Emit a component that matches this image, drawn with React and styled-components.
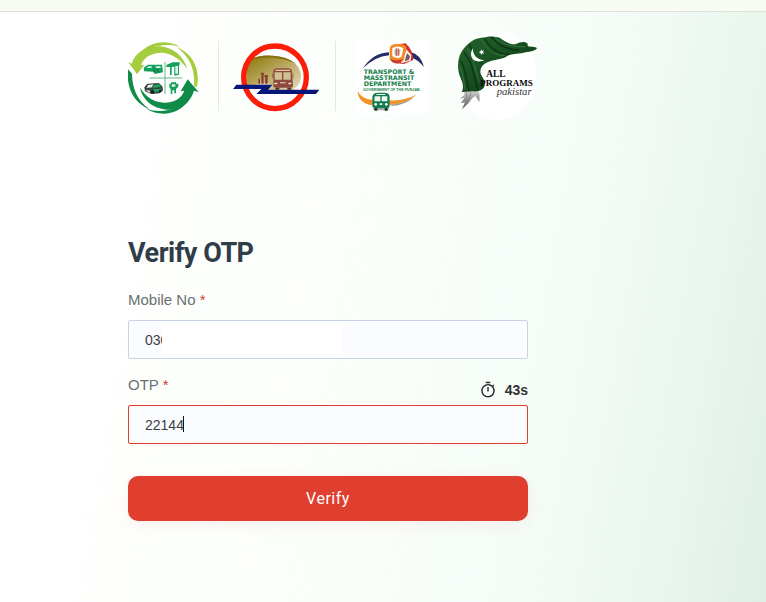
import React, { useState } from 'react';
import styled, { createGlobalStyle } from 'styled-components';
import { MdOutlineTimer } from 'react-icons/md';

const GlobalStyle = createGlobalStyle`
  *, *::before, *::after {
    box-sizing: border-box;
  }

  body {
    margin: 0;
    font-family: 'Liberation Sans', Arial, sans-serif;
    color: #333;
  }
`;

const Page = styled.div`
  display: flex;
  flex-direction: column;
  min-height: 100vh;
`;

const TopBar = styled.header`
  height: 12px;
  background: #f8fbf1;
  border-bottom: 1px solid #dde3d8;
`;

const Main = styled.main`
  flex: 1;
  padding: 16px 128px 64px;
  background: linear-gradient(100deg, #fff 12%, #fdfffc 30%, #fafefb 50%, #f5fcf8 70%, #e9f5ed 88%, #dfefe5 100%);

  @media (max-width: 600px) {
    padding: 16px 24px 64px;
  }
`;

const Logos = styled.div`
  display: flex;
  align-items: center;
  width: max-content;
  margin-bottom: 109px;
`;

const Logo = styled.svg`
  display: block;
  flex: none;
  margin-left: ${(props) => props.$gap || 0}px;
`;

const Divider = styled.span`
  width: 1px;
  height: 70px;
  margin: 0 ${(props) => props.$after}px 0 ${(props) => props.$before}px;
  background: #e3e9e5;
`;

const Form = styled.form`
  display: flex;
  flex-direction: column;
  max-width: 400px;
`;

const Title = styled.h1`
  margin: 0 0 19px;
  font-family: Roboto, sans-serif;
  font-size: 27px;
  font-weight: 700;
  line-height: 40px;
  letter-spacing: -0.5px;
  color: #2f3d48;
`;

const LabelRow = styled.div`
  display: flex;
  justify-content: space-between;
  height: 28px;
`;

const Label = styled.label`
  font-size: 15px;
  line-height: 16px;
  color: #6b6f73;
`;

const Required = styled.span`
  color: #d0432f;
`;

const Timer = styled.span`
  display: flex;
  align-items: center;
  align-self: flex-end;
  gap: 8px;
  height: 30px;
  font-size: 14px;
  font-weight: 700;
  color: #333;
`;

const Field = styled.div`
  position: relative;
  margin-bottom: ${(props) => (props.$last ? 32 : 18)}px;
`;

const Input = styled.input`
  display: block;
  width: 100%;
  height: 39px;
  padding: 0 16px;
  border: 1px solid ${(props) => (props.$active ? '#e03e2f' : '#c8d3e3')};
  border-radius: 2px;
  outline: none;
  background: #fbfcff;
  font-family: inherit;
  font-size: 14px;
  color: #3c4045;
  caret-color: transparent;
`;

// hides the rest of the number
const Mask = styled.span`
  position: absolute;
  top: 4px;
  left: 34px;
  width: 180px;
  height: 31px;
  background: #fff;
`;

const Caret = styled.span`
  position: absolute;
  top: 11px;
  left: 55px;
  width: 1px;
  height: 16px;
  background: #111;
`;

const Submit = styled.button`
  height: 45px;
  border: 0;
  border-radius: 10px;
  background: #e03e2f;
  box-shadow: 0 4px 16px rgba(224, 62, 47, 0.08);
  font-family: Roboto, sans-serif;
  font-size: 16px;
  font-weight: 400;
  letter-spacing: 0.5px;
  color: #fff;
  cursor: pointer;
`;

const CycleLogo = () => (
  <Logo width="72" height="86" viewBox="24 -3 216 258" role="img" aria-label="Transport cycle">
    <circle cx="131" cy="132" r="96" fill="#fff" />
    <g fill="#a5cd3f">
      <path d="M24 84 L35 89 C45 55 80 36 120 37 C160 40 190 66 202 104 C181 76 155 58 127 56 C96 55 72 70 63 92 L73 93 L51 120 Z" />
      <path d="M52 67 C82 24 135 13 181 39 C137 26 91 35 52 67 Z" />
      <path d="M170 39 C215 56 242 103 231 158 L222 157 C226 108 210 69 170 39 Z" />
    </g>
    <g fill="#118b48">
      <path d="M236 174 L222 170 C210 210 176 230 140 227 C98 224 68 199 59 160 C79 192 105 206 133 206 C162 206 184 194 193 170 L182 172 L203 136 Z" />
      <path d="M208 197 C178 240 125 251 79 225 C123 238 169 229 208 197 Z" />
      <path d="M90 227 C43 207 18 164 24 106 L36 119 C36 158 50 199 90 227 Z" />
    </g>
    <path d="M135 84 V180 M89 132 H187" stroke="#65b88c" strokeWidth="3" />
    <g fill="#12a15a">
      <path d="M71 101 L84 92 L126 92 L129 115 L105 120 L99 113 L72 112 Z" />
      <path d="M139 93 L158 85 H179 V92 H177 V122 L163 125 V98 L155 99 V123 H150 V99 H139 Z" />
      <path d="M148 149 H153 V145 H168 V149 H175 V158 L168 165 V178 H163 V169 H157 V180 H152 V165 L148 160 Z" />
    </g>
    <path d="M78 103 L86 97 H95 V102 H80 Z M106 97 H122 V102 H109 Z M166 96 H174 V119 H166 Z M155 151 H166 V158 H155 Z" fill="#d8f3e5" />
    <path d="M101 107 l4 8 m6 -10 l5 11" stroke="#195c3c" strokeWidth="3" />
    <path d="M73 160 L82 149 L116 147 L127 157 L129 169 L119 178 L94 180 L75 172 Z" fill="#34463d" />
    <path d="M84 153 L100 151 L96 160 L80 162 Z M77 168 L91 170 L88 176 Z" fill="#e8f1eb" />
    <path d="M102 153 L117 151 L123 158 L99 162 Z M99 166 L126 164 L119 172 L101 175 Z" fill="#19a35e" />
    <circle cx="98" cy="174" r="5" fill="#171b19" />
    <circle cx="121" cy="171" r="4" fill="#171b19" />
  </Logo>
);

const MetroLogo = () => (
  <Logo width="88" height="86" viewBox="69 -3 264 258" role="img" aria-label="Metro bus authority">
    <defs>
      <linearGradient id="hill" x1="0" y1="0" x2="1" y2="1">
        <stop offset="0" stopColor="#887608" />
        <stop offset="0.45" stopColor="#b5a456" />
        <stop offset="1" stopColor="#e5dcc0" />
      </linearGradient>
    </defs>
    <circle cx="195" cy="130" r="94" fill="#fff" />
    <path d="M109 153 V88 C119 71 145 65 181 65 C235 65 272 91 273 124 C274 143 266 157 249 167 H155 L168 153 Z" fill="url(#hill)" />
    <path d="M119 80 C137 66 162 64 184 65 C215 66 240 74 258 90 C220 70 164 65 119 80 Z" fill="#84720d" />
    <path d="M133 153 Q158 137 184 151 L173 158 H134 Z" fill="#f0dfd3" opacity="0.7" />
    <path d="M145 134 H150 V150 H145 Z M154 119 H161 V149 H154 Z M165 126 H173 V149 H165 Z M152 116 H162 V121 H152 Z M163 123 H174 V128 H163 Z" fill="#884236" />
    <circle cx="195" cy="130" r="94" fill="none" stroke="#fa1d08" strokeWidth="16" />
    <g>
      <path d="M190 157 V114 Q190 103 201 103 H234 Q245 103 246 114 L249 155 Q249 161 240 161 H199 Q190 161 190 157 Z" fill="#8d4a3c" />
      <path d="M196 107 H240 V111 H196 Z" fill="#dbc99d" />
      <path d="M194 115 H216 V137 H194 Z M220 115 H242 V137 H220 Z" fill="#d1c092" />
      <path d="M193 146 H202 V151 H193 Z M235 146 H244 V151 H235 Z M210 145 H227 V148 H210 Z" fill="#f0dfc7" />
      <path d="M188 118 V132 M249 118 V132" stroke="#8d4a3c" strokeWidth="2" />
      <path d="M196 161 H208 V167 H196 Z M232 161 H244 V167 H232 Z" fill="#5d2c25" />
    </g>
    <path d="M79 152 H187 L174 167 H328 L318 180 H139 L154 165 H69 Z" fill="#061779" />
  </Logo>
);

const DeptText = styled.text`
  font-family: 'DejaVu Sans', Verdana, sans-serif;
  font-size: 19px;
  font-weight: 700;
  fill: #17804b;
`;

const DeptSubText = styled(DeptText)`
  font-family: 'Liberation Sans', Arial, sans-serif;
  font-size: 11px;
`;

const DepartmentLogo = () => (
  <Logo width="72" height="86" viewBox="33 -3 216 258" role="img" aria-label="Transport and Masstransit Department">
    <path d="M33 20 H249 V240 H33 Z" fill="#fff" />
    <path d="M54 103 Q84 57 132 55 L132 64 Q89 68 54 103 Z" fill="#252c69" />
    <path d="M195 53 Q228 61 237 99 Q218 76 195 69 Z" fill="#252c69" />
    <path d="M160 31 L182 28 Q205 50 205 78 L177 90 L154 88 Z" fill="#d52f2d" />
    <path d="M184 46 L199 63 L197 80 L168 88 Z" fill="#f6efea" />
    <path d="M186 58 L195 67 L192 77 L179 82 Z" fill="#78546b" />
    <path d="M134 77 V43 Q136 30 155 30 Q183 28 184 41 L176 79 Q163 92 147 85 Z" fill="#f08a22" />
    <path d="M142 42 Q157 33 175 42 L170 68 Q157 76 142 67 Z" fill="#fff" />
    <path d="M148 47 L158 43 L167 48 L163 65 L149 64 Z" fill="#b8b6bc" />
    <path d="M154 43 V66 M160 44 V65" stroke="#e1552f" strokeWidth="3" />
    <path d="M135 74 Q155 83 173 74 L168 85 Q153 92 141 84 Z" fill="#c8402c" />
    <DeptText x="56" y="120">TRANSPORT &amp;</DeptText>
    <DeptText x="56" y="137">MASSTRANSIT</DeptText>
    <DeptText x="56" y="155">DEPARTMENT</DeptText>
    <DeptSubText x="54" y="170">GOVERNMENT OF THE PUNJAB</DeptSubText>
    <path d="M38 171 Q47 194 84 198 L82 214 Q40 208 38 171 Z" fill="#f39329" />
    <path d="M132 199 Q180 202 215 181 Q186 211 133 213 Z" fill="#ed942f" />
    <path d="M139 212 Q179 209 208 190 Q180 214 139 216 Z" fill="#999" />
    <ellipse cx="108" cy="225" rx="26" ry="4" fill="#aaa" />
    <path d="M82 188 Q85 176 98 176 H119 Q133 176 134 188 V216 Q134 222 127 222 H90 Q82 222 82 216 Z" fill="#147b50" />
    <path d="M89 187 H106 V202 H88 Z M110 187 H127 V202 H110 Z" fill="#ecf7ef" />
    <path d="M94 180 H121 V183 H94 Z M104 208 H112 V213 H104 Z" fill="#dff2e5" />
    <circle cx="92" cy="211" r="4" fill="#fff" />
    <circle cx="124" cy="211" r="4" fill="#fff" />
    <path d="M88 222 H97 V230 H88 Z M119 222 H128 V230 H119 Z" fill="#173d2b" />
  </Logo>
);

const ProgramText = styled.text`
  font-family: 'Liberation Serif', 'Times New Roman', serif;
  font-size: ${(props) => props.$size}px;
  font-weight: ${(props) => (props.$light ? 400 : 700)};
  font-style: ${(props) => (props.$light ? 'italic' : 'normal')};
  fill: ${(props) => (props.$light ? '#333' : '#090909')};
`;

const ProgramsLogo = () => (
  <Logo $gap={29} width="81" height="96" viewBox="36 0 243 288" role="img" aria-label="All Programs Pakistan">
    <defs>
      <linearGradient id="silk" x1="0" y1="0" x2="1" y2="1">
        <stop offset="0" stopColor="#25642d" />
        <stop offset="0.5" stopColor="#174e20" />
        <stop offset="1" stopColor="#0a3013" />
      </linearGradient>
      <linearGradient id="fray" x1="0" y1="0" x2="0" y2="1">
        <stop offset="0" stopColor="#d5d5d5" />
        <stop offset="1" stopColor="#555" />
      </linearGradient>
    </defs>
    <ellipse cx="156" cy="142" rx="119" ry="134" fill="#fff" />
    <path d="M55 188 L100 187 Q106 200 103 222 L91 204 L82 211 L70 226 L51 244 L60 222 L48 226 L58 209 L44 212 L58 201 Z" fill="url(#fray)" />
    <path d="M64 193 L66 208 L56 224 M78 193 L72 212 L60 230" fill="none" stroke="#777" strokeWidth="2" />
    <path d="M40 126 C36 93 47 65 73 45 C92 27 112 30 128 26 C140 25 158 27 165 30 C180 40 192 50 212 49 C226 41 240 39 248 47 L248 54 C258 58 270 54 276 61 C270 70 250 72 236 74 C215 79 200 76 187 84 C174 93 164 92 152 96 C125 100 107 110 106 131 C106 145 124 155 119 174 Q112 192 85 190 L50 192 C62 168 43 152 40 126 Z" fill="url(#silk)" />
    <g fill="none" strokeLinecap="round">
      <path d="M58 75 C84 100 84 141 98 183 M48 100 C64 128 62 156 72 187 M140 28 C160 50 190 66 222 66 M120 34 C140 66 170 82 192 78 M74 50 C80 70 92 92 108 104" stroke="#082e11" strokeWidth="5" opacity="0.7" />
      <path d="M68 62 C90 96 84 112 103 160 M46 118 C56 142 56 164 60 184 M150 30 C172 52 210 58 240 56 M108 34 C122 62 146 84 178 82" stroke="#45804a" strokeWidth="3" opacity="0.7" />
    </g>
    <path d="M83 61 C70 82 84 112 118 96 C98 97 84 83 83 61 Z" fill="#fff" />
    <path d="M108 64 l3 5 6 -2 -3 5 4 5 -6 -1 -4 5 -1 -6 -6 -2 6 -3 Z" fill="#fff" />
    <ProgramText x="124" y="148" $size="28">ALL</ProgramText>
    <ProgramText x="106" y="174" $size="27">PROGRAMS</ProgramText>
    <ProgramText x="155" y="202" $size="32" $light>pakistar</ProgramText>
  </Logo>
);

const VerifyForm = () => {
  const [mobile, setMobile] = useState('030');
  const [otp, setOtp] = useState('22144');

  return (
    <Form onSubmit={(e) => e.preventDefault()}>
      <Title>Verify OTP</Title>
      <LabelRow>
        <Label htmlFor="mobile">Mobile No <Required>*</Required></Label>
      </LabelRow>
      <Field>
        <Input id="mobile" type="tel" value={mobile} onChange={(e) => setMobile(e.target.value)} />
        <Mask />
      </Field>
      <LabelRow>
        <Label htmlFor="otp">OTP <Required>*</Required></Label>
        <Timer>
          <MdOutlineTimer size={18} />
          43s
        </Timer>
      </LabelRow>
      <Field $last>
        <Input id="otp" type="text" inputMode="numeric" $active value={otp} onChange={(e) => setOtp(e.target.value)} />
        <Caret />
      </Field>
      <Submit type="submit">Verify</Submit>
    </Form>
  );
};

const App = () => (
  <>
    <GlobalStyle />
    <Page>
      <TopBar />
      <Main>
        <Logos>
          <CycleLogo />
          <Divider $before={18} $after={14} />
          <MetroLogo />
          <Divider $before={14} $after={20} />
          <DepartmentLogo />
          <ProgramsLogo />
        </Logos>
        <VerifyForm />
      </Main>
    </Page>
  </>
);

export default App;
